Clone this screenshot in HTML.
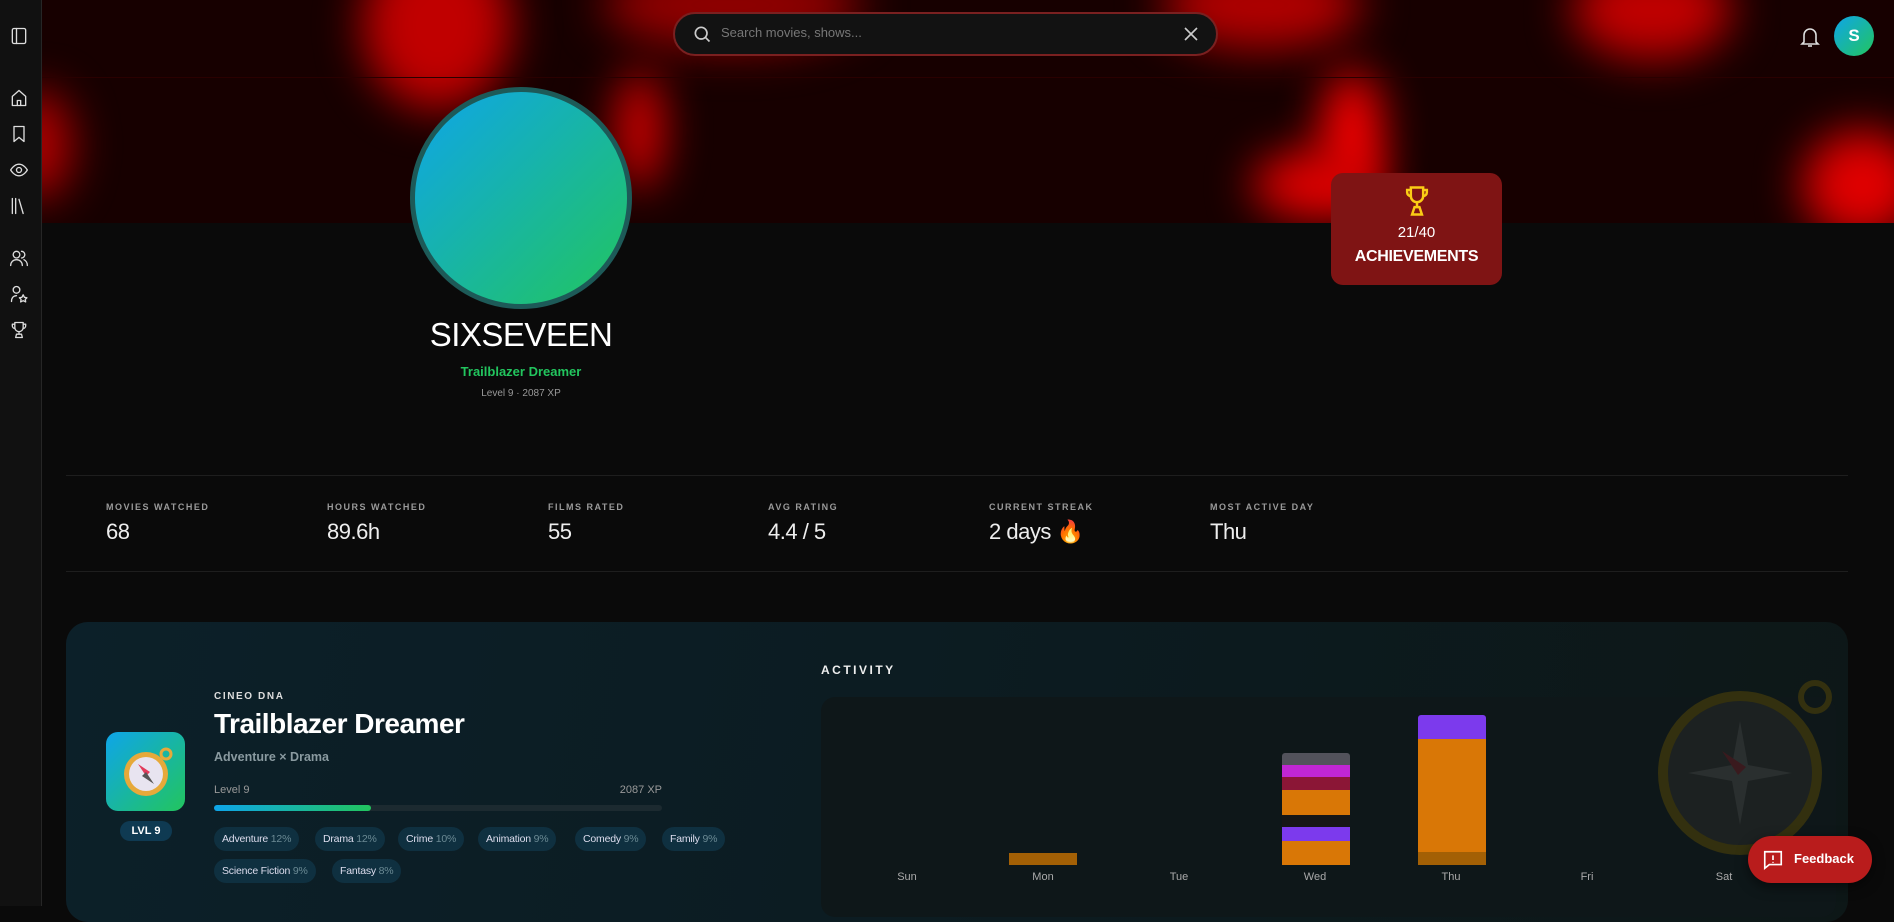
<!DOCTYPE html>
<html><head><meta charset="utf-8"><style>
*{margin:0;padding:0;box-sizing:border-box}
body{width:1894px;height:906px;overflow:hidden;background:#0a0a0a;font-family:"Liberation Sans",sans-serif;color:#fff;position:relative}
.abs{position:absolute}
#side{left:0;top:0;width:42px;height:906px;background:#111;border-right:1px solid #262626;z-index:5}
#side svg{position:absolute;left:9px;width:20px;height:20px;fill:none;stroke:#ddd;stroke-width:1.6;stroke-linecap:round;stroke-linejoin:round}
#banner{left:42px;top:0;width:1852px;height:223px;background:#170000;overflow:hidden}
.blob{position:absolute;border-radius:50%;filter:blur(22px)}
.lab{font-size:9px;letter-spacing:1.5px;color:#9a9a9a;font-weight:bold}
.val{font-size:22px;color:#eee;letter-spacing:-0.5px}
.chip{position:absolute;height:24px;line-height:24px;padding:0 8px;border-radius:12px;background:#0f3040;font-size:10.5px;color:#dde;letter-spacing:-0.2px}
.chip span{color:#6b8a94}
.day{position:absolute;top:871px;font-size:11px;color:#aaa;width:60px;text-align:center}
.bar{position:absolute;width:68px}
</style></head><body>
<div id="side" class="abs">
<svg style="top:26px" viewBox="0 0 24 24"><rect x="4" y="3" width="16" height="18" rx="2"/><path d="M9 3v18"/></svg>
<svg style="top:88px" viewBox="0 0 24 24"><path d="M4 10l8-7 8 7v11H4z"/><path d="M10 21v-6h4v6"/></svg>
<svg style="top:124px" viewBox="0 0 24 24"><path d="M6 3h12v18l-6-5-6 5z"/></svg>
<svg style="top:160px" viewBox="0 0 24 24"><path d="M2 12s4-7 10-7 10 7 10 7-4 7-10 7S2 12 2 12z"/><circle cx="12" cy="12" r="3"/></svg>
<svg style="top:196px" viewBox="0 0 24 24"><path d="M4 3v18M8 3v18M12 4l5 17"/></svg>
<svg style="top:248px" viewBox="0 0 24 24"><circle cx="9" cy="8" r="4"/><path d="M2 21c0-4 3-7 7-7s7 3 7 7M15 4a4 4 0 010 8M18 14c2 1 4 3 4 7"/></svg>
<svg style="top:284px" viewBox="0 0 24 24"><circle cx="9" cy="7" r="4"/><path d="M3 21c0-4 2-7 6-7M17 13l1.5 3 3 .5-2 2 .5 3-3-1.5-3 1.5.5-3-2-2 3-.5z"/></svg>
<svg style="top:320px" viewBox="0 0 24 24"><path d="M7 3h10v6a5 5 0 01-10 0zM7 5H4v2a3 3 0 003 3M17 5h3v2a3 3 0 01-3 3M12 14v3M8 21h8l-1-4H9z"/></svg>
</div>
<div id="banner" class="abs">
<div class="blob" style="left:320px;top:-60px;width:150px;height:170px;background:#c00000"></div>
<div class="blob" style="left:560px;top:-40px;width:260px;height:90px;background:#900000"></div>
<div class="blob" style="left:1120px;top:-40px;width:200px;height:90px;background:#b00000"></div>
<div class="blob" style="left:1530px;top:-40px;width:160px;height:100px;background:#c00000"></div>
<div class="blob" style="left:1280px;top:70px;width:60px;height:130px;background:#ff0000"></div>
<div class="blob" style="left:1210px;top:150px;width:130px;height:70px;background:#e00000"></div>
<div class="blob" style="left:575px;top:70px;width:45px;height:120px;background:#e00000"></div>
<div class="blob" style="left:1760px;top:130px;width:120px;height:110px;background:#e00000"></div>
<div class="blob" style="left:-40px;top:90px;width:70px;height:110px;background:#b00000"></div>
<div class="abs" style="left:0;top:77px;width:1852px;height:1px;background:#2a0000"></div>
</div>
<div class="abs" style="left:673px;top:12px;width:545px;height:44px;border-radius:22px;background:#121212;border:2px solid #7a2020"></div>
<svg class="abs" style="left:692px;top:24px" width="20" height="20" viewBox="0 0 24 24" fill="none" stroke="#ccc" stroke-width="2"><circle cx="11" cy="11" r="7"/><path d="M16 16l5 5"/></svg>
<div class="abs" style="left:721px;top:25px;font-size:13px;color:#777">Search movies, shows...</div>
<svg class="abs" style="left:1183px;top:26px" width="16" height="16" viewBox="0 0 16 16" stroke="#ccc" stroke-width="1.6"><path d="M2 2l12 12M14 2L2 14"/></svg>
<svg class="abs" style="left:1798px;top:25px" width="24" height="24" viewBox="0 0 24 24" fill="none" stroke="#ddd" stroke-width="1.6"><path d="M6 17V10a6 6 0 0112 0v7l2 2H4z"/><path d="M10 21h4"/></svg>
<div class="abs" style="left:1834px;top:16px;width:40px;height:40px;border-radius:50%;background:linear-gradient(135deg,#0ea5e9,#22c55e);text-align:center;line-height:40px;font-weight:bold;font-size:17px">S</div>
<div class="abs" style="left:410px;top:87px;width:222px;height:222px;border-radius:50%;background:linear-gradient(135deg,#0ea5e9,#22c55e);border:5px solid #1d5a58"></div>
<div class="abs" style="left:321px;top:316px;width:400px;text-align:center;font-size:33px;letter-spacing:-0.5px">SIXSEVEEN</div>
<div class="abs" style="left:321px;top:364px;width:400px;text-align:center;font-size:13px;color:#22c55e;font-weight:bold">Trailblazer Dreamer</div>
<div class="abs" style="left:321px;top:388px;width:400px;text-align:center;font-size:10px;color:#999">Level 9 · 2087 XP</div>
<div class="abs" style="left:1331px;top:173px;width:171px;height:112px;border-radius:12px;background:#7f1414;text-align:center">
<svg style="margin-top:12px" width="30" height="32" viewBox="0 0 24 26" fill="none" stroke="#facc15" stroke-width="2"><path d="M7 2h10v7a5 5 0 01-10 0zM7 4H4v2a3 3 0 003 3M17 4h3v2a3 3 0 01-3 3M12 14v4M8 24h8l-2-6h-4z"/></svg>
<div style="font-size:15px;margin-top:2px">21/40</div>
<div style="font-size:16px;font-weight:bold;margin-top:7px;letter-spacing:-0.3px">ACHIEVEMENTS</div></div>
<div class="abs" style="left:66px;top:475px;width:1782px;height:1px;background:#1e1e1e"></div>
<div class="abs" style="left:66px;top:571px;width:1782px;height:1px;background:#1e1e1e"></div>
<div class="abs lab" style="left:106px;top:502px">MOVIES WATCHED</div><div class="abs val" style="left:106px;top:519px">68</div>
<div class="abs lab" style="left:327px;top:502px">HOURS WATCHED</div><div class="abs val" style="left:327px;top:519px">89.6h</div>
<div class="abs lab" style="left:548px;top:502px">FILMS RATED</div><div class="abs val" style="left:548px;top:519px">55</div>
<div class="abs lab" style="left:768px;top:502px">AVG RATING</div><div class="abs val" style="left:768px;top:519px">4.4 / 5</div>
<div class="abs lab" style="left:989px;top:502px">CURRENT STREAK</div><div class="abs val" style="left:989px;top:519px">2 days <span style="color:#f97316">&#128293;</span></div>
<div class="abs lab" style="left:1210px;top:502px">MOST ACTIVE DAY</div><div class="abs val" style="left:1210px;top:519px">Thu</div>
<div class="abs" style="left:66px;top:622px;width:1782px;height:300px;border-radius:22px;background:linear-gradient(100deg,#0c2029 0%,#0c1c22 45%,#0d1717 100%)"></div>
<div class="abs" style="left:214px;top:691px;font-size:10px;letter-spacing:1.6px;font-weight:bold;color:#ddd">CINEO DNA</div>
<div class="abs" style="left:214px;top:708px;font-size:28px;font-weight:bold;letter-spacing:-0.5px">Trailblazer Dreamer</div>
<div class="abs" style="left:214px;top:750px;font-size:12.5px;color:#8a9aa0;font-weight:bold">Adventure × Drama</div>
<div class="abs" style="left:214px;top:784px;font-size:11px;color:#999">Level 9</div>
<div class="abs" style="left:600px;top:784px;width:62px;text-align:right;font-size:11px;color:#999">2087 XP</div>
<div class="abs" style="left:214px;top:805px;width:448px;height:6px;border-radius:3px;background:#1c2a30"></div>
<div class="abs" style="left:214px;top:805px;width:157px;height:6px;border-radius:3px;background:linear-gradient(90deg,#0ea5e9,#22c55e)"></div>
<div class="abs" style="left:106px;top:732px;width:79px;height:79px;border-radius:12px;background:linear-gradient(135deg,#0ea5e9,#22c55e)">
<svg width="79" height="79" viewBox="0 0 79 79"><circle cx="40" cy="42" r="22" fill="#e6a93a"/><circle cx="40" cy="42" r="17" fill="#e8e4f0"/><circle cx="60" cy="22" r="5" fill="none" stroke="#e6a93a" stroke-width="3"/><path d="M32 32l12 8-4 4z" fill="#e23a5a"/><path d="M48 52l-12-8 4-4z" fill="#555"/></svg></div>
<div class="abs" style="left:120px;top:821px;width:52px;height:20px;border-radius:10px;background:#0f3a52;text-align:center;line-height:20px;font-size:11px;font-weight:bold">LVL 9</div>
<div class="chip" style="left:214px;top:827px">Adventure <span>12%</span></div>
<div class="chip" style="left:315px;top:827px">Drama <span>12%</span></div>
<div class="chip" style="left:398px;top:827px">Crime <span>10%</span></div>
<div class="chip" style="left:478px;top:827px">Animation <span>9%</span></div>
<div class="chip" style="left:575px;top:827px">Comedy <span>9%</span></div>
<div class="chip" style="left:662px;top:827px">Family <span>9%</span></div>
<div class="chip" style="left:214px;top:859px">Science Fiction <span>9%</span></div>
<div class="chip" style="left:332px;top:859px">Fantasy <span>8%</span></div>
<div class="abs" style="left:821px;top:663px;font-size:12px;letter-spacing:2.5px;font-weight:bold;color:#eee">ACTIVITY</div>
<div class="abs" style="left:821px;top:697px;width:1015px;height:220px;border-radius:14px;background:#0e1719"></div>
<div class="abs" style="left:1658px;top:691px;width:164px;height:164px;border-radius:50%;border:10px solid #33300f;background:#1c2121"></div>
<svg class="abs" style="left:1668px;top:701px" width="144" height="144" viewBox="0 0 144 144"><path d="M72 20L80 64 124 72 80 80 72 124 64 80 20 72 64 64z" fill="#2a2f2f"/><path d="M54 50L78 66 70 74z" fill="#3a1a1e"/></svg>
<div class="abs" style="left:1798px;top:680px;width:34px;height:34px;border-radius:50%;border:6px solid #33300f"></div>
<div class="bar" style="left:1009px;top:853px;height:12px;background:#a36005"></div>
<div class="bar" style="left:1282px;top:753px;height:12px;background:#52525b;border-radius:3px 3px 0 0"></div>
<div class="bar" style="left:1282px;top:765px;height:12px;background:#c026d3"></div>
<div class="bar" style="left:1282px;top:777px;height:13px;background:#8b1636"></div>
<div class="bar" style="left:1282px;top:790px;height:25px;background:#d97706"></div>
<div class="bar" style="left:1282px;top:815px;height:12px;background:#161616"></div>
<div class="bar" style="left:1282px;top:827px;height:14px;background:#7c3aed"></div>
<div class="bar" style="left:1282px;top:841px;height:24px;background:#d97706"></div>
<div class="bar" style="left:1418px;top:715px;height:24px;background:#7c3aed;border-radius:3px 3px 0 0"></div>
<div class="bar" style="left:1418px;top:739px;height:113px;background:#d97706"></div>
<div class="bar" style="left:1418px;top:852px;height:13px;background:#a36005"></div>
<div class="day" style="left:877px">Sun</div><div class="day" style="left:1013px">Mon</div><div class="day" style="left:1149px">Tue</div><div class="day" style="left:1285px">Wed</div><div class="day" style="left:1421px">Thu</div><div class="day" style="left:1557px">Fri</div><div class="day" style="left:1694px">Sat</div>
<div class="abs" style="left:1748px;top:836px;width:124px;height:47px;border-radius:24px;background:#b91c1c;box-shadow:0 4px 12px rgba(0,0,0,.5)">
<svg class="abs" style="left:14px;top:13px" width="22" height="22" viewBox="0 0 24 24" fill="none" stroke="#fff" stroke-width="1.8"><path d="M3 3h18v14H8l-5 4z"/><path d="M12 7v5M12 14v1"/></svg>
<div class="abs" style="left:46px;top:15px;font-size:13px;font-weight:bold">Feedback</div></div>
</body></html>
